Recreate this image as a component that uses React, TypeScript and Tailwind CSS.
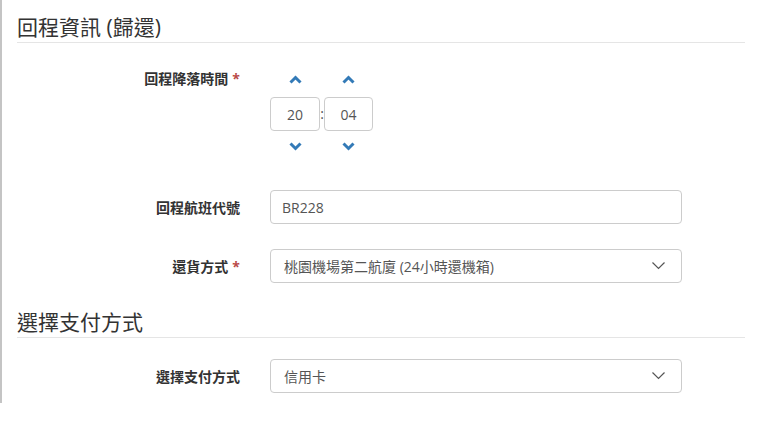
import React from 'react';

const font = { fontFamily: '"Open Sans", "Noto Sans CJK TC", sans-serif' };

const ChevronUp = () => (
  <svg width="13" height="9" viewBox="0 0 13 9" fill="none">
    <polyline points="1.5,7.5 6.5,2.5 11.5,7.5" stroke="#337ab7" strokeWidth="3" />
  </svg>
);

const ChevronDown = () => (
  <svg width="13" height="9" viewBox="0 0 13 9" fill="none">
    <polyline points="1.5,1.5 6.5,6.5 11.5,1.5" stroke="#337ab7" strokeWidth="3" />
  </svg>
);

const SelectCaret = () => (
  <svg width="13" height="8" viewBox="0 0 13 8" fill="none">
    <polyline points="0.5,0.5 6.5,6.5 12.5,0.5" stroke="#555" strokeWidth="1.2" />
  </svg>
);

const Label: React.FC<{ text: string; required?: boolean }> = ({ text, required }) => (
  <div className="w-[223px] text-right text-[14px] font-bold text-[#333]">
    {text}
    {required && <span className="text-[#b94a48] ml-1">*</span>}
  </div>
);

const SectionTitle: React.FC<{ title: string; className?: string }> = ({ title, className }) => (
  <div className={`border-b border-[#e5e5e5] pb-[3px] ${className ?? ''}`}>
    <h3 className="text-[21px] leading-[24px] font-normal text-[#333]">{title}</h3>
  </div>
);

const SelectBox: React.FC<{ value: string }> = ({ value }) => (
  <div className="ml-[30px] w-[412px] h-[34px] border border-[#ccc] rounded-[4px] flex items-center justify-between pl-[13px] pr-[16px] text-[14px] text-[#555]">
    <span>{value}</span>
    <SelectCaret />
  </div>
);

export default function App() {
  return (
    <div className="w-[760px] h-[423px] bg-white" style={font}>
      <div className="border-l-2 border-[#c4c4c4] pb-[10px]">
        <div className="ml-[15px] w-[728px]">
          <SectionTitle title="回程資訊 (歸還)" className="pt-[15px]" />

          {/* landing time */}
          <div className="flex mt-[27px]">
            <div className="leading-[18px]">
              <Label text="回程降落時間" required />
            </div>
            <div className="ml-[30px] flex flex-col">
              <div className="flex h-[18px] items-center">
                <div className="w-[50px] flex justify-center"><ChevronUp /></div>
                <div className="w-[4px]" />
                <div className="w-[49px] flex justify-center"><ChevronUp /></div>
              </div>
              <div className="flex mt-[9px] items-center">
                <div className="w-[50px] h-[34px] border border-[#ccc] rounded-[4px] flex items-center justify-center text-[14px] text-[#555]">20</div>
                <div className="w-[4px] text-center text-[14px] text-[#555] leading-none">:</div>
                <div className="w-[49px] h-[34px] border border-[#ccc] rounded-[4px] flex items-center justify-center text-[14px] text-[#555]">04</div>
              </div>
              <div className="flex h-[18px] mt-[6px] items-center">
                <div className="w-[50px] flex justify-center"><ChevronDown /></div>
                <div className="w-[4px]" />
                <div className="w-[49px] flex justify-center"><ChevronDown /></div>
              </div>
            </div>
          </div>

          {/* flight number */}
          <div className="flex items-center mt-[35px]">
            <Label text="回程航班代號" />
            <div className="ml-[30px] w-[412px] h-[34px] border border-[#ccc] rounded-[4px] flex items-center pl-[11px] text-[14px] text-[#555]">
              BR228
            </div>
          </div>

          {/* return method */}
          <div className="flex items-center mt-[25px]">
            <Label text="還貨方式" required />
            <SelectBox value="桃園機場第二航廈 (24小時還機箱)" />
          </div>

          <SectionTitle title="選擇支付方式" className="mt-[27px]" />

          <div className="flex items-center mt-[21px]">
            <Label text="選擇支付方式" />
            <SelectBox value="信用卡" />
          </div>
        </div>
      </div>
    </div>
  );
}
